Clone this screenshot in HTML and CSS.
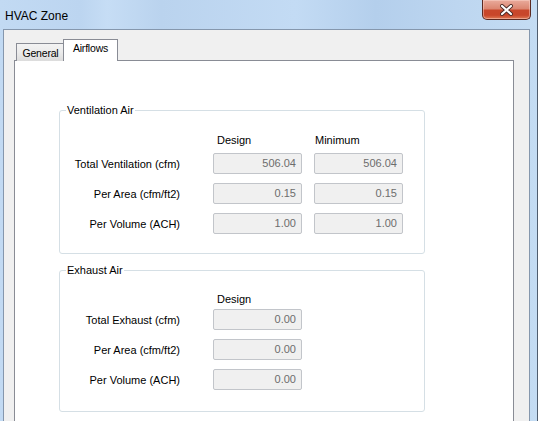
FILE: index.html
```html
<!DOCTYPE html>
<html>
<head>
<meta charset="utf-8">
<link rel="stylesheet" href="styles.css">
</head>
<body>
<div class="window">
  <div class="titlebar">
    <span class="title">HVAC Zone</span>
    <div class="close">
      <svg width="13" height="12" viewBox="0 0 13 12">
        <path d="M2 2 L11 10 M11 2 L2 10" stroke="#4a2a25" stroke-width="4" stroke-linecap="round"/>
        <path d="M2 2 L11 10 M11 2 L2 10" stroke="#ffffff" stroke-width="2.2" stroke-linecap="round"/>
      </svg>
    </div>
  </div>
  <div class="client">
    <div class="tabs">
      <div class="tab">General</div>
      <div class="tab active">Airflows</div>
    </div>
    <div class="panel">
      <fieldset class="group vent">
        <legend>Ventilation Air</legend>
        <div class="head">
          <span class="lbl"></span>
          <span class="col design">Design</span>
          <span class="col minimum">Minimum</span>
        </div>
        <div class="row">
          <span class="lbl">Total Ventilation (cfm)</span>
          <div class="field">506.04</div>
          <div class="field">506.04</div>
        </div>
        <div class="row">
          <span class="lbl">Per Area (cfm/ft2)</span>
          <div class="field">0.15</div>
          <div class="field">0.15</div>
        </div>
        <div class="row">
          <span class="lbl">Per Volume (ACH)</span>
          <div class="field">1.00</div>
          <div class="field">1.00</div>
        </div>
      </fieldset>
      <fieldset class="group exhaust">
        <legend>Exhaust Air</legend>
        <div class="head">
          <span class="lbl"></span>
          <span class="col design">Design</span>
        </div>
        <div class="row">
          <span class="lbl">Total Exhaust (cfm)</span>
          <div class="field">0.00</div>
        </div>
        <div class="row">
          <span class="lbl">Per Area (cfm/ft2)</span>
          <div class="field">0.00</div>
        </div>
        <div class="row">
          <span class="lbl">Per Volume (ACH)</span>
          <div class="field">0.00</div>
        </div>
      </fieldset>
    </div>
  </div>
</div>
</body>
</html>
```
FILE: styles.css
```css
html, body {
  margin: 0;
  padding: 0;
}
body {
  width: 538px;
  height: 421px;
  overflow: hidden;
  font-family: "Liberation Sans", Arial, sans-serif;
  font-size: 11px;
  color: #000;
}
.window {
  box-sizing: border-box;
  width: 538px;
  height: 421px;
  display: flex;
  flex-direction: column;
  padding: 0 7px 0 3px;
  border-right: 1px solid #4f5d6e;
  background: linear-gradient(90deg, #c2daf3 0%, #bcd5f0 15%, #c6ddf5 20%, #bad3ee 30%, #c3dbf4 55%, #b4cfec 70%, #bdd6f0 85%, #c4dcf3 100%);
}
.titlebar {
  height: 29px;
  flex: none;
  display: flex;
  align-items: flex-start;
  justify-content: space-between;
  margin-right: -7px;
}
.title {
  font-size: 12px;
  line-height: 14px;
  margin: 9px 0 0 2px;
  color: #000;
}
.close {
  box-sizing: border-box;
  width: 49px;
  height: 20px;
  margin-right: 6px;
  border: 1px solid #5b2a22;
  border-top: none;
  border-radius: 0 0 5px 5px;
  background: linear-gradient(180deg, #e9ab9c 0%, #dc8772 45%, #c8472b 55%, #c8462a 80%, #df7b55 100%);
  box-shadow: inset 0 0 0 1px rgba(255, 220, 210, 0.45);
  display: flex;
  align-items: center;
  justify-content: center;
}
.close svg {
  display: block;
}
.client {
  flex: 1;
  display: flex;
  flex-direction: column;
  border: 1px solid #8597ad;
  border-bottom: none;
  background: #f0f0f0;
  padding: 10px 15px 0 10px;
}
.tabs {
  display: flex;
  align-items: flex-end;
  height: 21px;
  padding-left: 2px;
  margin-bottom: -1px;
  position: relative;
  z-index: 1;
}
.tab {
  box-sizing: border-box;
  width: 48px;
  height: 18px;
  padding: 1px 0 0 1px;
  text-align: center;
  font-size: 10.5px;
  line-height: 16px;
  letter-spacing: -0.2px;
  border: 1px solid #898c95;
  border-bottom: none;
  background: linear-gradient(180deg, #f3f3f3 0%, #ebebeb 50%, #dcdcdc 100%);
  color: #000;
}
.tab.active {
  width: 55px;
  height: 22px;
  margin-left: -1px;
  padding: 0 0 3px 0;
  background: #fff;
}
.panel {
  flex: 1;
  background: #fff;
  border: 1px solid #898c95;
  border-bottom: none;
  padding: 43px 0 0 44px;
}
.group {
  box-sizing: border-box;
  width: 366px;
  margin: 0;
  padding: 17px 0 19px 0;
  min-width: 0;
  border: 1px solid #d5dfe5;
  border-radius: 3px;
}
.group legend {
  margin-left: 6px;
  padding: 0 1px;
  line-height: 13px;
  font-size: 11px;
}
.exhaust {
  margin-top: 10px;
  padding-top: 16px;
  padding-bottom: 21px;
}
.head, .row {
  display: flex;
  align-items: center;
}
.head {
  height: 13px;
  line-height: 13px;
}
.row {
  height: 21px;
  margin-top: 9px;
}
.head + .row {
  margin-top: 6px;
}
.exhaust .head + .row {
  margin-top: 3px;
}
.lbl {
  box-sizing: border-box;
  width: 141px;
  padding-right: 21px;
  text-align: right;
  white-space: nowrap;
}
.col {
  width: 89px;
  margin-left: 12px;
}
.col.design {
  padding-left: 4px;
  box-sizing: border-box;
}
.col.minimum {
  padding-left: 1px;
  box-sizing: border-box;
}
.field {
  box-sizing: border-box;
  width: 89px;
  height: 21px;
  margin-left: 12px;
  border: 1px solid #c2c5ca;
  border-radius: 2px;
  background: #f0f0f0;
  color: #6d6d6d;
  text-align: right;
  padding-right: 5px;
  line-height: 19px;
}
```
